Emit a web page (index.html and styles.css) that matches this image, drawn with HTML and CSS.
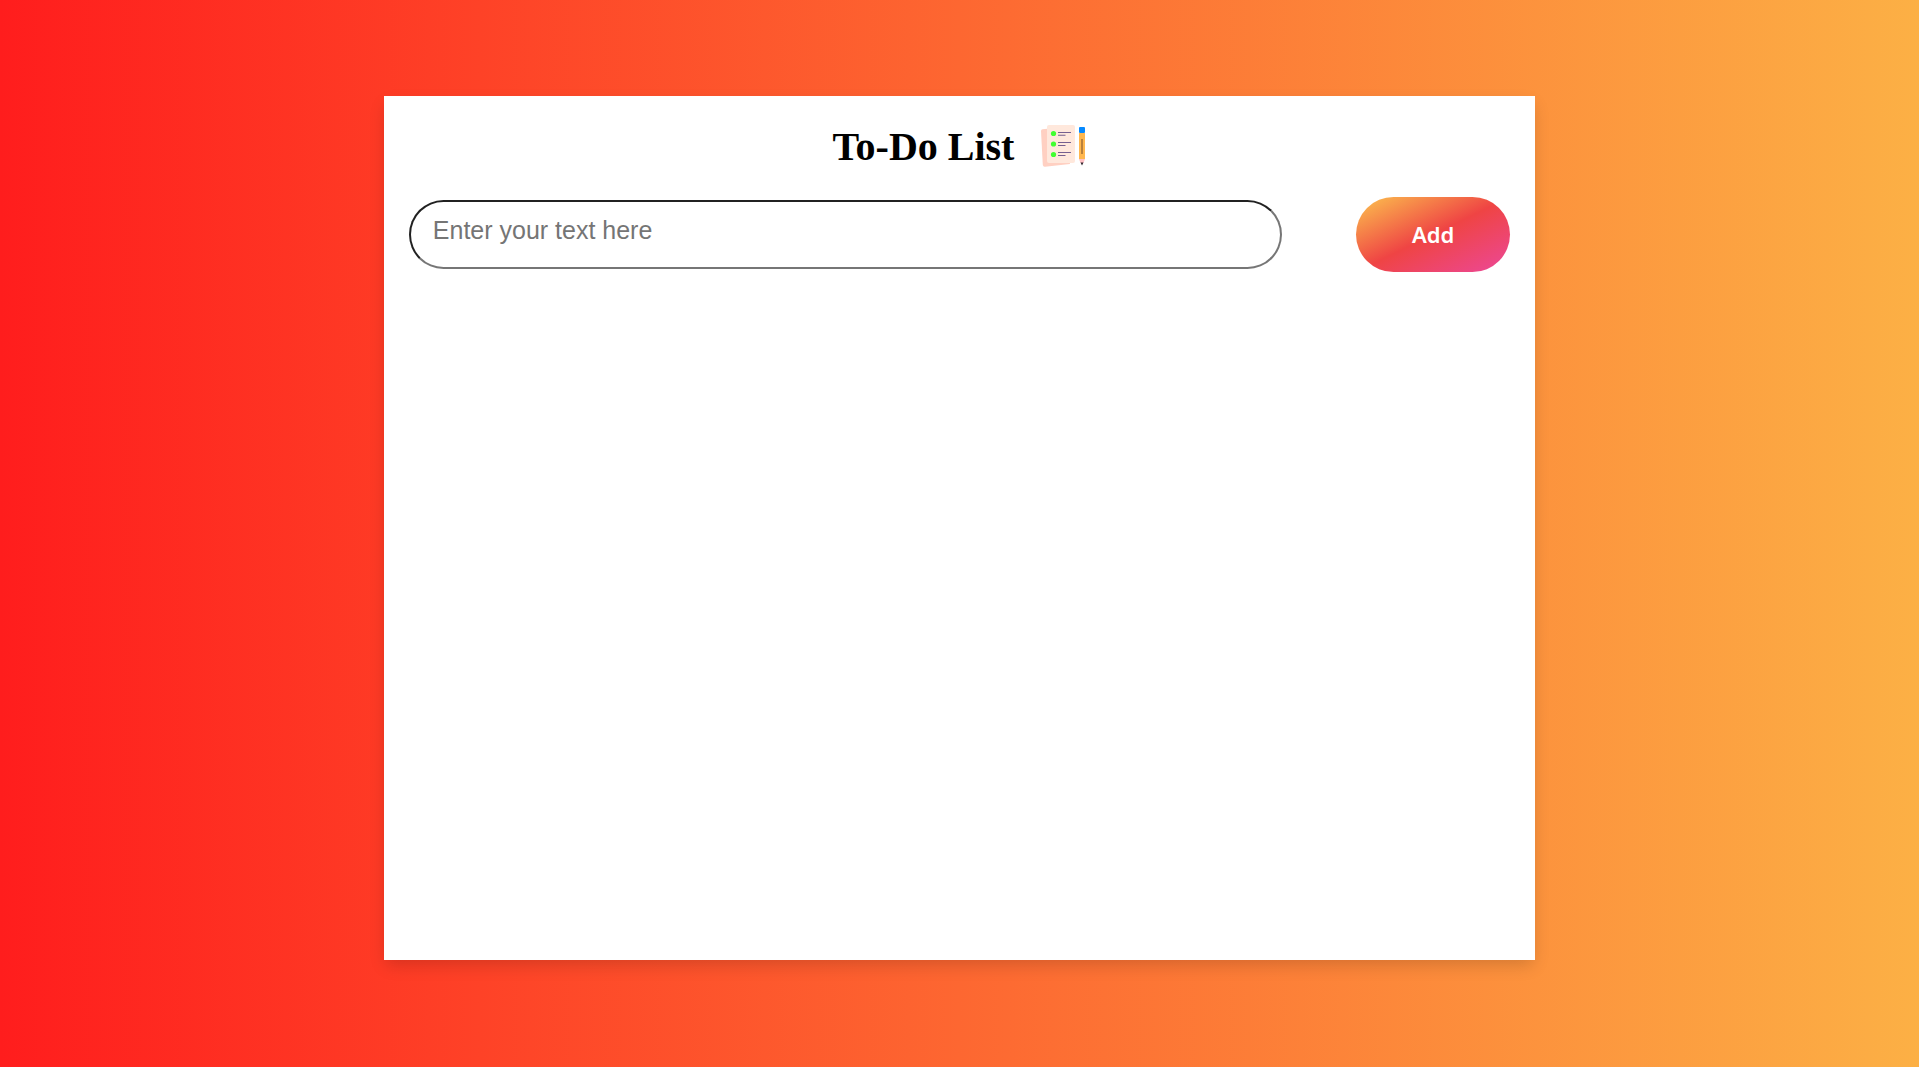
FILE: index.html
```html
<!DOCTYPE html>
<html lang="en">
<head>
<meta charset="utf-8">
<meta name="viewport" content="width=device-width, initial-scale=1">
<title>To-Do List</title>
<link rel="stylesheet" href="styles.css">
</head>
<body>
<main class="card">
  <h1 class="title">
    <span class="title-text">To-Do List</span>
    <svg class="title-icon" viewBox="0 0 48 48" aria-hidden="true">
      <path fill="#ffd0c2" d="M3 10Q3 8.500 4.500 8.300L27 6L32 43L7 45.700Q5 45.900 4.800 44Z"/>
      <rect x="9" y="4" width="28" height="38" rx="2" fill="#ffe8dc"/>
      <g fill="#41ff30"><circle cx="15.500" cy="12.500" r="2.600"/><circle cx="15.500" cy="23" r="2.600"/><circle cx="15.500" cy="33.500" r="2.600"/></g>
      <path stroke="#76608f" stroke-width="1.100" d="M20 11.500H33M20 21.500H33M20 31.500H33M20 14.200H27.500M20 24.500H27.500M20 34.500H27.500"/>
      <rect x="41" y="6" width="6" height="6" rx="1" fill="#0589ff"/>
      <path fill="#ffb74f" d="M41 12H47V38H41Z"/>
      <path stroke="#a87338" stroke-width="1.600" d="M44 18V33"/>
      <path fill="#ffc1c5" d="M41 38H47L45.500 42H42.500Z"/>
      <path fill="#30252d" d="M42.500 41.500H45.500L44 44.500Z"/>
    </svg>
  </h1>
  <form class="entry">
    <input class="entry-text" type="text" placeholder="Enter your text here" aria-label="New task">
    <button class="entry-add" type="button">Add</button>
  </form>
</main>
</body>
</html>
```

FILE: styles.css
```css
* {
  box-sizing: border-box;
}

body {
  margin: 0;
  min-height: 100vh;
  padding: 96px 20%;
  display: flex;
  align-items: flex-start;
  font-family: "Liberation Serif", "Times New Roman", serif;
  background: linear-gradient(90deg, #ff1d1d, #fd6731, #fcb045);
}

.card {
  flex: 1;
  min-height: 81vh;
  padding: 25px;
  background: #fff;
  box-shadow: 0 7px 16px -2px rgba(0, 0, 0, 0.16);
}

.title {
  display: flex;
  justify-content: center;
  align-items: center;
  gap: 24px;
  margin: 0 0 28px;
  font-size: 40px;
  line-height: 44px;
}

.title-text {
  padding-top: 4px;
}

.title-icon {
  width: 48px;
  height: 48px;
}

.entry {
  display: flex;
  justify-content: space-between;
  align-items: center;
}

.entry-text {
  width: 873px;
  max-width: 80%;
  height: 69px;
  padding: 0 22px 8px;
  border: 2px inset #767676;
  border-radius: 35px;
  font: 25px/28px "Liberation Sans", Arial, sans-serif;
}

.entry-text::placeholder {
  color: #757575;
}

.entry-add {
  width: 154px;
  height: 75px;
  padding: 0 0 2px;
  border: 0;
  border-radius: 38px;
  color: #fff;
  font: 600 22px/28px "Noto Sans", "Open Sans", sans-serif;
  background: linear-gradient(to bottom right, #fcc44e, #ef4444, #ec4899);
}
```
